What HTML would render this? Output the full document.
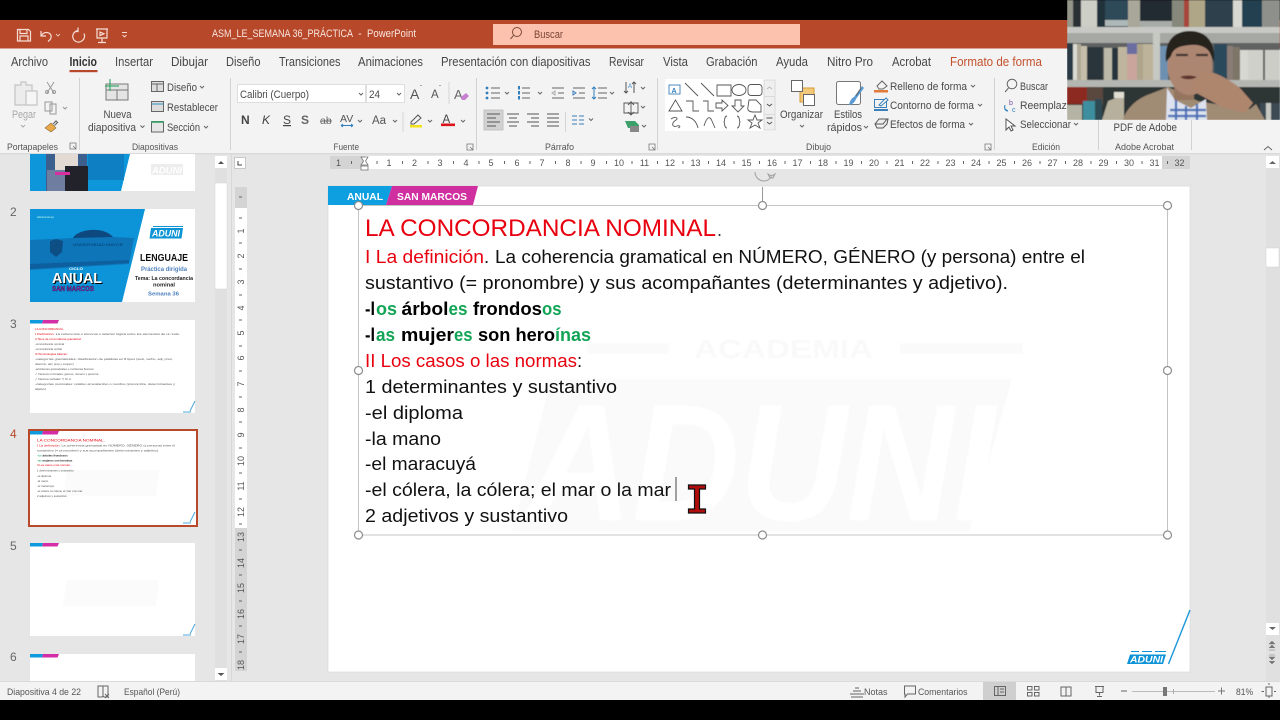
<!DOCTYPE html>
<html lang="es"><head><meta charset="utf-8"><title>ASM_LE_SEMANA 36_PRÁCTICA - PowerPoint</title>
<style>
html,body{margin:0;padding:0;background:#000;width:1280px;height:720px;overflow:hidden}
svg.root{display:block;filter:blur(.3px)}
text{font-family:"Liberation Sans",sans-serif;fill:#444;font-size:12px}
.t{font-size:12.5px;fill:#474747}
.s{font-size:11px;fill:#4a4a4a}
.g{font-size:9.5px;fill:#555}
.b{font-size:18.5px;fill:#111}
.r{fill:#E8000F}
.gr{fill:#12A555;font-weight:bold}
.k{font-weight:bold;fill:#000}
.n{font-size:9px;fill:#555;text-anchor:middle}
.i{fill:none;stroke:#666;stroke-width:1}
.h{fill:#fff;stroke:#8c8c8c;stroke-width:1.2}
.m{font-size:2.9px;fill:#555}
</style></head><body>
<svg class="root" width="1280" height="720" viewBox="0 0 1280 720" xmlns="http://www.w3.org/2000/svg">
<defs><filter id="bl"><feGaussianBlur stdDeviation="0.6"/></filter><filter id="bt"><feGaussianBlur stdDeviation="0.25"/></filter></defs>
<rect width="1280" height="720" fill="#000"/>
<!-- title bar -->
<rect y="20" width="1280" height="28.500" fill="#B8482A"/>
<g fill="none" stroke="#F5DDD5" stroke-width="1.200">
<path d="M17.500 29.500h11l2 2v9.500h-13zM20 29.500v4h7v-4M20 41v-5h8v5"/>
<path d="M41 31v5h5M41.500 35.500c2-4 8-4 9.500 0c.7 2.500-1 4.500-3 6"/>
<path d="M56 34l2 2 2-2" stroke-width=".8"/>
<path d="M76 30.500c-4 1-6 4-5 7.500c1 3.500 5 5 8 3.500c3-1.500 4.500-5 3-8M76 27.500v4h-3" transform="translate(2 0)"/>
<path d="M96 29h12M97 29v9h10v-9M102 38v4M98 42.500h8M100 32l4 1.800-4 1.800z"/>
<path d="M122 32.500h5M122.500 35l2 2 2-2" stroke-width=".9"/>
</g>
<text x="212" y="37" textLength="141" lengthAdjust="spacingAndGlyphs" style="font-size:11px;fill:#F8E6DF">ASM_LE_SEMANA 36_PRÁCTICA</text>
<text x="358" y="37" style="font-size:11px;fill:#F8E6DF">-</text>
<text x="367" y="37" textLength="49" lengthAdjust="spacingAndGlyphs" style="font-size:11px;fill:#F8E6DF">PowerPoint</text>
<rect x="493" y="24" width="307" height="21" fill="#FCC2AE"/>
<circle cx="517" cy="32" r="4.500" fill="none" stroke="#7A4A3A" stroke-width="1"/><path d="M513.500 35.500l-3 3.500" stroke="#7A4A3A" stroke-width="1"/>
<text x="534" y="38" textLength="29" lengthAdjust="spacingAndGlyphs" style="font-size:11px;fill:#7A4636">Buscar</text>
<!-- ribbon -->
<rect y="48.500" width="1280" height="105" fill="#F3F3F3"/>
<text class="t" x="11" y="66" textLength="37" lengthAdjust="spacingAndGlyphs">Archivo</text>
<text class="t" x="69.500" y="66" textLength="27.500" lengthAdjust="spacingAndGlyphs" style="fill:#333;font-weight:bold">Inicio</text>
<rect x="69.500" y="70" width="28" height="2.200" fill="#B8482A"/>
<text class="t" x="115" y="66" textLength="38" lengthAdjust="spacingAndGlyphs">Insertar</text>
<text class="t" x="171" y="66" textLength="37" lengthAdjust="spacingAndGlyphs">Dibujar</text>
<text class="t" x="226" y="66" textLength="34.500" lengthAdjust="spacingAndGlyphs">Diseño</text>
<text class="t" x="279" y="66" textLength="61.500" lengthAdjust="spacingAndGlyphs">Transiciones</text>
<text class="t" x="358" y="66" textLength="65" lengthAdjust="spacingAndGlyphs">Animaciones</text>
<text class="t" x="441" y="66" textLength="149.500" lengthAdjust="spacingAndGlyphs">Presentación con diapositivas</text>
<text class="t" x="609" y="66" textLength="35" lengthAdjust="spacingAndGlyphs">Revisar</text>
<text class="t" x="663" y="66" textLength="25" lengthAdjust="spacingAndGlyphs">Vista</text>
<text class="t" x="706" y="66" textLength="51.500" lengthAdjust="spacingAndGlyphs">Grabación</text>
<text class="t" x="776" y="66" textLength="32" lengthAdjust="spacingAndGlyphs">Ayuda</text>
<text class="t" x="827" y="66" textLength="46" lengthAdjust="spacingAndGlyphs">Nitro Pro</text>
<text class="t" x="892" y="66" textLength="39" lengthAdjust="spacingAndGlyphs">Acrobat</text>
<text class="t" x="950" y="66" textLength="92" lengthAdjust="spacingAndGlyphs" style="fill:#C4512D">Formato de forma</text>
<!-- separators -->
<path d="M79.500 78v72M230.500 78v72M476.500 78v72M657.500 78v72M994.500 78v72M1098.500 120v30M1191.500 120v30" stroke="#D2D2D2" fill="none"/>
<!-- group labels -->
<text class="g" x="7" y="150" textLength="51" lengthAdjust="spacingAndGlyphs">Portapapeles</text>
<text class="g" x="132" y="150" textLength="46" lengthAdjust="spacingAndGlyphs">Diapositivas</text>
<text class="g" x="333.500" y="150" textLength="25.500" lengthAdjust="spacingAndGlyphs">Fuente</text>
<text class="g" x="545" y="150" textLength="29" lengthAdjust="spacingAndGlyphs">Párrafo</text>
<text class="g" x="806" y="150" textLength="25" lengthAdjust="spacingAndGlyphs">Dibujo</text>
<text class="g" x="1032" y="150" textLength="28" lengthAdjust="spacingAndGlyphs">Edición</text>
<text class="g" x="1115" y="150" textLength="59" lengthAdjust="spacingAndGlyphs">Adobe Acrobat</text>
<g fill="none" stroke="#777" stroke-width=".8"><path d="M70 143h6v6h-6zM73 146l3 3M76 147v2h-2"/><path d="M467 144h6v6h-6zM470 147l3 3M473 148v2h-2"/><path d="M649 144h6v6h-6zM652 147l3 3M655 148v2h-2"/><path d="M985 144h6v6h-6zM988 147l3 3M991 148v2h-2"/></g>
<!-- clipboard -->
<g fill="none" stroke="#C4C4C4" stroke-width="1.200"><path d="M15 85h6v-3h5v3h6v20h-17z" fill="#ECECEC"/><rect x="26" y="91" width="11" height="14" fill="#F6F6F6"/></g>
<text x="12" y="118" textLength="24" lengthAdjust="spacingAndGlyphs" style="font-size:11px;fill:#A8A8A8">Pegar</text>
<path d="M21 125l2 2 2-2" fill="none" stroke="#aaa"/>
<g fill="none" stroke="#999" stroke-width="1"><path d="M47 82l7 11M54 82l-7 11"/><circle cx="47" cy="92" r="1.500"/><circle cx="54" cy="92" r="1.500"/><path d="M45 102h7v9h-7zM50 104h6v10h-6z"/><path d="M63 107l2 2 2-2"/></g>
<path d="M45 128l6-5 5 5-5 4z" fill="#E9A94A" stroke="#8a6a3a" stroke-width=".6"/><path d="M53 124l3-3 1.500 1.500-3 3" fill="none" stroke="#666" stroke-width="1.200"/>
<!-- nueva diapositiva -->
<rect x="106" y="84" width="22" height="16" fill="#E4E4E4" stroke="#777"/><path d="M106 90h22M117 90v10" stroke="#777" fill="none"/><path d="M105 86h14M110 79v12" stroke="#3BAA6A" stroke-width="1.200" fill="none"/>
<text class="s" x="103.500" y="118" textLength="28" lengthAdjust="spacingAndGlyphs">Nueva</text>
<text class="s" x="88" y="131" textLength="48" lengthAdjust="spacingAndGlyphs">diapositiva</text>
<path d="M140.500 125.500l2 2 2-2" fill="none" stroke="#666"/>
<g class="i"><rect x="151.500" y="81.500" width="12" height="10" fill="#DDD"/><path d="M151.500 84h12M157 84v7"/><rect x="151.500" y="101.500" width="12" height="10" fill="#DDD"/><path d="M151.500 104h12" stroke="#2F8FBF"/><rect x="151.500" y="121.500" width="12" height="10.500" fill="#E6E6E6"/><path d="M151 122h13" stroke="#38A167" stroke-width="1.600"/></g>
<text class="s" x="167" y="91" textLength="30" lengthAdjust="spacingAndGlyphs">Diseño</text><path d="M200 86l2 2 2-2" class="i"/>
<text class="s" x="167" y="111" textLength="51" lengthAdjust="spacingAndGlyphs">Restablecer</text>
<text class="s" x="167" y="131" textLength="33" lengthAdjust="spacingAndGlyphs">Sección</text><path d="M204 126l2 2 2-2" class="i"/>
<!-- font -->
<rect x="237.500" y="84.500" width="128" height="18" fill="#fff" stroke="#DEDEDE"/><rect x="366.500" y="84.500" width="38" height="18" fill="#fff" stroke="#DEDEDE"/>
<text class="s" x="240" y="98" textLength="69" lengthAdjust="spacingAndGlyphs">Calibri (Cuerpo)</text>
<path d="M359 93l2 2 2-2M397 93l2 2 2-2" class="i"/>
<text class="s" x="369" y="98" textLength="11" lengthAdjust="spacingAndGlyphs">24</text>
<text x="410" y="99" style="font-size:14px;fill:#555">A</text><text x="420" y="90" style="font-size:6px;fill:#555">ˆ</text>
<text x="431" y="98" style="font-size:11.500px;fill:#555">A</text><text x="439" y="90" style="font-size:6px;fill:#555">ˇ</text>
<text x="454" y="99" style="font-size:13px;fill:#666">A</text><path d="M461 97l5-4 3 3-4 4h-3z" fill="#C77FD0"/>
<path d="M449 82v22" stroke="#d5d5d5"/>
<text x="241" y="124" style="font-size:12px;font-weight:bold;fill:#444">N</text>
<text x="262" y="124" style="font-size:12px;font-style:italic;fill:#444">K</text>
<text x="283" y="124" style="font-size:12px;fill:#444;text-decoration:underline">S</text>
<text x="301" y="124" style="font-size:12px;font-weight:bold;fill:#666">S</text>
<text x="320" y="124" style="font-size:10.500px;fill:#666;text-decoration:line-through">ab</text>
<text x="340" y="122" style="font-size:10.500px;fill:#555">AV</text><path d="M341 125.500h12M341 125.500l2-1.500M341 125.500l2 1.500M353 125.500l-2-1.500M353 125.500l-2 1.500" stroke="#2F7FBF" fill="none"/>
<path d="M358 120l2 2 2-2M393 120l2 2 2-2" class="i"/>
<text x="372" y="124" style="font-size:11.500px;fill:#555">Aa</text>
<path d="M403 112v20" stroke="#d5d5d5"/>
<path d="M411 122l7-7 3 3-7 6h-3z" fill="none" stroke="#555"/><rect x="410" y="125" width="12" height="2.500" fill="#F2E21A"/><path d="M428 120l2 2 2-2" class="i"/>
<text x="442.500" y="123" style="font-size:11.500px;fill:#444">A</text><rect x="441" y="123.500" width="14" height="2.600" fill="#D8141C"/><path d="M461 120l2 2 2-2" class="i"/>
<!-- paragraph -->
<g stroke="#666" fill="none" stroke-width="1"><path d="M491 88h9M491 93h9M491 98h9M522 88h8M522 93h8M522 98h8M552 88h12M558 93h6M552 98h12M573 88h12M579 93h6M573 98h12M598 88h9M598 93h9M598 98h9"/><path d="M552 93l3-2v4z" stroke="#aaa"/><path d="M573 91l3 2-3 2z" stroke="#3D7FB9"/></g>
<g fill="#2F7FBF"><circle cx="487" cy="88" r="1.400"/><circle cx="487" cy="93" r="1.400"/><circle cx="487" cy="98" r="1.400"/><rect x="518" y="86" width="2" height="3.500"/><rect x="518" y="91" width="2" height="3.500"/><rect x="518" y="96" width="2" height="3.500"/></g>
<path d="M594 87v12M592 89l2-2 2 2M592 97l2 2 2-2" stroke="#2F7FBF" fill="none"/>
<path d="M505 92l2 2 2-2M538 92l2 2 2-2M610 92l2 2 2-2M641 87l2 2 2-2" class="i"/>
<path d="M626 82v11M624 91l2 2 2-2M634 82v11M632 84l2-2 2 2" stroke="#555" fill="none"/>
<text x="628" y="88" style="font-size:6px;fill:#2F7FBF">A</text>
<rect x="484" y="110" width="19" height="20" fill="#D2D2D2" stroke="#BBB" stroke-width=".8"/>
<g stroke="#555" fill="none"><path d="M487 114h13M487 118h9M487 122h13M487 126h9M507 114h12M509 118h8M507 122h12M509 126h8M527 114h12M531 118h8M527 122h12M531 126h8M547 114h12M547 118h12M547 122h12M547 126h12"/></g>
<path d="M565.500 112v20" stroke="#d5d5d5"/>
<g stroke="#3D7FB9" fill="none"><path d="M572 116h5M572 120h5M572 124h5M579 116h5M579 120h5M579 124h5"/></g>
<path d="M589 118.500l2 2 2-2" class="i"/>
<path d="M624 103h14v10h-14zM631 101v14M628 105l3-3 3 3M628 112l3 3 3-3" stroke="#555" fill="none" stroke-width=".9"/>
<path d="M641 106l2 2 2-2M642 125l2 2 2-2" class="i"/>
<path d="M625 121h10l4 4v3h-11z" fill="#3BA06A"/><rect x="630" y="126" width="9" height="6" fill="#888"/>
<!-- shapes gallery -->
<rect x="665" y="79" width="110" height="52" fill="#fff"/>
<rect x="764" y="80" width="11" height="50" fill="#EFEFEF" stroke="#DADADA"/><path d="M764 96.500h11M764 114.500h11" stroke="#DADADA"/>
<path d="M767 89l2.500-2 2.500 2" stroke="#bbb" fill="none"/><path d="M767 104l2.500 2 2.500-2" stroke="#555" fill="none"/><path d="M766.500 118h6M767 122l2.500 2 2.500-2" stroke="#555" fill="none"/>
<g fill="none" stroke="#555" stroke-width=".9">
<rect x="669" y="85" width="11" height="9" stroke="#3D7FB9"/>
<path d="M685 83l13 13M701 83l13 13M717 85h14v11h-14z"/><ellipse cx="739" cy="90" rx="7" ry="5.500"/><rect x="748" y="84.500" width="14" height="11" rx="3"/>
<path d="M669 111l6.500-11 6.500 11zM686 101h7v10h6M703 101h5v10h6M716 103h6v-3l6 5.500-6 5.500v-3h-6zM735 100h6v6h3l-6 6-6-6h3zM749 100h7l5 5v7h-8c-4 0-6-2-5-5z"/>
<path d="M671 119c4-3 8-1 5 1c-5 3-4 8 1 6c3-1 4 1 1 2M686 117c5 0 10 3 12 11M704 126c3-10 6-10 8-5l3 7M727 116c-3 0-2 5-3 6c1 1 0 6 3 6M737 116c3 0 2 5 3 6c-1 1 0 6-3 6M755 115l2 5 5 0-4 3 2 5-5-3-5 3 2-5-4-3 5 0z"/>
</g>
<text x="671.500" y="93" style="font-size:7px;fill:#2F7FBF;font-weight:bold">A</text>
<!-- organizar etc -->
<rect x="800" y="88" width="14" height="14" fill="#F3C879" stroke="#D79B35"/><rect x="791.500" y="80.500" width="11" height="11" fill="#fff" stroke="#666"/><rect x="803.500" y="94.500" width="11" height="11" fill="#fff" stroke="#666"/>
<text class="s" x="780" y="118" textLength="43" lengthAdjust="spacingAndGlyphs">Organizar</text><path d="M800 125l2 2 2-2" class="i"/>
<rect x="836.500" y="81.500" width="24" height="23" rx="2" fill="#fff" stroke="#777"/><path d="M849 105c1-5 3-7 5-8l8-11 2 2-8 11c-1 3-4 6-7 6z" fill="#5A9BD5"/><path d="M856 96l5-8" stroke="#666"/>
<text class="s" x="834" y="118" textLength="28" lengthAdjust="spacingAndGlyphs">Estilos</text>
<text class="s" x="827" y="131" textLength="35" lengthAdjust="spacingAndGlyphs">rápidos</text><path d="M864 126l2 2 2-2" class="i"/>
<path d="M877 86l5-5 5 5-4 3h-4z" fill="none" stroke="#666"/><rect x="874" y="90" width="14" height="2.500" fill="#E07B39"/>
<rect x="874.500" y="99.500" width="12" height="8" fill="none" stroke="#3D7FB9"/><path d="M879 105l7-7 2 2-7 6z" fill="#fff" stroke="#3D7FB9"/><rect x="874" y="109" width="14" height="2" fill="#3D7FB9"/>
<path d="M875 124l4-5h9l-1 5-4 4h-6z" fill="#eee" stroke="#555"/><path d="M875 124h8l4-5" stroke="#555" fill="none"/>
<text class="s" x="890" y="90" textLength="77" lengthAdjust="spacingAndGlyphs">Relleno de forma</text><path d="M971 85l2 2 2-2" class="i"/>
<text class="s" x="890" y="109" textLength="84" lengthAdjust="spacingAndGlyphs">Contorno de forma</text><path d="M978 104l2 2 2-2" class="i"/>
<text class="s" x="890" y="128" textLength="75" lengthAdjust="spacingAndGlyphs">Efectos de forma</text><path d="M969 123l2 2 2-2" class="i"/>
<!-- editing -->
<circle cx="1012" cy="84" r="4.800" fill="none" stroke="#666"/><path d="M1008.500 88l-3.500 4" stroke="#666"/>
<text class="s" x="1020" y="90" textLength="28" lengthAdjust="spacingAndGlyphs">Buscar</text>
<text x="1009" y="105" style="font-size:7px;fill:#7C4FA8">b</text><text x="1012" y="112" style="font-size:7px;fill:#2F7FBF">c</text><path d="M1005 105c-1 3 0 6 3 6M1005 109l3 2" stroke="#2F7FBF" fill="none"/>
<text class="s" x="1020" y="109" textLength="56" lengthAdjust="spacingAndGlyphs">Reemplazar</text>
<path d="M1006 119v11l3-3 2 4 2-1-2-4h4z" fill="#fff" stroke="#555"/>
<text class="s" x="1020" y="128" textLength="51" lengthAdjust="spacingAndGlyphs">Seleccionar</text><path d="M1074 123l2 2 2-2" class="i"/>
<text class="s" x="1113.500" y="131" textLength="63.500" lengthAdjust="spacingAndGlyphs">PDF de Adobe</text>
<path d="M1264 150l4-3.500 4 3.500" class="i"/>
<!-- workspace -->
<rect y="153.500" width="1280" height="529" fill="#E6E6E6"/>
<rect y="153" width="1280" height="1.500" fill="#DADADA"/>
<!-- thumbnails -->
<g filter="url(#bt)">
<rect x="30" y="154" width="165" height="37" fill="#fff"/>
<path d="M30 154h100l-9 37H30z" fill="#0A96DA"/>
<rect x="88" y="154" width="36" height="26" fill="#0A7FC2"/>
<rect x="46" y="154" width="41" height="37" fill="#3D5F8E"/>
<rect x="55" y="154" width="23" height="16" fill="#E4DAD4"/><rect x="47" y="170" width="18" height="21" fill="#6E7DA0"/><rect x="65" y="166" width="23" height="25" fill="#24242C"/>
<rect x="55" y="172" width="15" height="3" fill="#D82E9F"/>
<rect x="151" y="164" width="32" height="11" fill="#EDEDED"/>
<text x="152" y="173.500" textLength="30" lengthAdjust="spacingAndGlyphs" style="font-size:9.500px;font-style:italic;font-weight:bold;fill:#fff">ADUNI</text>
<rect x="30" y="209" width="165" height="93" fill="#fff"/>
<path d="M30 209h115l-23 93H30z" fill="#0C94D8"/>
<path d="M30 240l43-2c5-9 30-12 40-1l21 1-5 26-99 6z" fill="#0A74B8"/>
<path d="M73 238c5-9 30-12 40-1z" fill="#0A4A7E"/>
<path d="M50 241l6-2 7 2-1 11-6 5-6-5z" fill="#0A4F85"/>
<path d="M30 264l99-4v3l-99 6z" fill="#0A5E9E"/>
<text x="73" y="246" textLength="50" lengthAdjust="spacingAndGlyphs" style="font-size:4px;fill:#063E6D">UNIVERSIDAD MAYOR</text>
<text x="37" y="218" style="font-size:2.500px;fill:#cfe">adunicursos.pe</text>
<text x="69" y="270" textLength="14" lengthAdjust="spacingAndGlyphs" style="font-size:4px;fill:#fff;font-weight:bold">CICLO</text>
<text x="53" y="284" textLength="50" lengthAdjust="spacingAndGlyphs" style="font-size:15px;font-weight:bold;fill:#000">ANUAL</text>
<text x="52" y="283" textLength="50" lengthAdjust="spacingAndGlyphs" style="font-size:15px;font-weight:bold;fill:#fff">ANUAL</text>
<text x="52" y="291" textLength="42" lengthAdjust="spacingAndGlyphs" style="font-size:7px;font-weight:bold;fill:#C52A9A;stroke:#1A1A60;stroke-width:.4">SAN MARCOS</text>
<path d="M151 228h32l-1.500 10.500h-32z" fill="#0E94D6"/><rect x="153" y="226" width="30" height="1" fill="#0E94D6"/>
<text x="152" y="236.500" textLength="28" lengthAdjust="spacingAndGlyphs" style="font-size:9px;font-style:italic;font-weight:bold;fill:#fff">ADUNI</text>
<text x="140" y="261" textLength="48" lengthAdjust="spacingAndGlyphs" style="font-size:10.500px;font-weight:bold;fill:#111">LENGUAJE</text>
<text x="141" y="271" textLength="46" lengthAdjust="spacingAndGlyphs" style="font-size:6px;font-weight:bold;fill:#4F81BD">Práctica dirigida</text>
<text x="135" y="280" textLength="58" lengthAdjust="spacingAndGlyphs" style="font-size:5px;font-weight:bold;fill:#222">Tema: La concordancia</text>
<text x="153" y="286.500" textLength="22" lengthAdjust="spacingAndGlyphs" style="font-size:5px;font-weight:bold;fill:#222">nominal</text>
<text x="148" y="295.500" textLength="31" lengthAdjust="spacingAndGlyphs" style="font-size:5.500px;font-weight:bold;fill:#4F81BD">Semana 36</text>
<rect x="30" y="320" width="165" height="93" fill="#fff"/>
<path d="M30 320h13l-1 3.500H30z" fill="#0C9BDD"/><path d="M43 320h16l-1.500 3.500H42z" fill="#D32FA6"/>
<text class="m" x="35" y="330" style="fill:#E8000F">LA CONCORDANCIA.</text>
<text class="m" x="35" y="335" textLength="145" lengthAdjust="spacingAndGlyphs"><tspan style="fill:#E8000F">I Definición.</tspan> La coherencia o armonía o relación lógica entre los elementos de un todo.</text>
<text class="m" x="35" y="340" style="fill:#E8000F">II Tipos de concordancia gramatical:</text>
<text class="m" x="35" y="345">-concordancia nominal</text>
<text class="m" x="35" y="350">-concordancia verbal</text>
<text class="m" x="35" y="355" style="fill:#E8000F">III Terminologías básicas:</text>
<text class="m" x="35" y="360" textLength="138" lengthAdjust="spacingAndGlyphs">-categorías gramaticales: clasificación de palabras en 8 tipos (sust, verbo, adj, pron,</text>
<text class="m" x="35" y="365">determin, adv, prep y conjunc)</text>
<text class="m" x="35" y="370">-accidentes gramaticales o morfemas flexivos:</text>
<text class="m" x="35" y="375">✓ Flexivos nominales: género, número y persona</text>
<text class="m" x="35" y="380">✓ Flexivos verbales: T, M, A</text>
<text class="m" x="35" y="385" textLength="140" lengthAdjust="spacingAndGlyphs">-categorías nominales: relativo al sustantivo o nombre (pronombre, determinantes y</text>
<text class="m" x="35" y="390">adjetivo)</text>
<path d="M183 412h8M190 411l5-10" stroke="#4CA8DC" fill="none"/>
<rect x="29" y="430" width="168" height="96" fill="#fff" stroke="#B8482A" stroke-width="2"/>
<path d="M30 431h13l-1 3.500H30z" fill="#0C9BDD"/><path d="M43 431h16l-1.500 3.500H42z" fill="#D32FA6"/>
<path d="M67 470h92l-3 26H63z" fill="#FBFBFB"/>
<text x="37" y="441.500" textLength="68" lengthAdjust="spacingAndGlyphs" style="fill:#E8000F;font-size:4px">LA CONCORDANCIA NOMINAL.</text>
<text class="m" x="37" y="446.500" textLength="138" lengthAdjust="spacingAndGlyphs"><tspan style="fill:#E8000F">I La definición</tspan>. La coherencia gramatical en NÚMERO, GÉNERO (y persona) entre el</text>
<text class="m" x="37" y="451.500" textLength="122" lengthAdjust="spacingAndGlyphs">sustantivo (= pronombre) y sus acompañantes (determinantes y adjetivo).</text>
<text class="m" x="37" y="456.500"><tspan style="fill:#12A555">-los </tspan><tspan style="font-weight:bold;fill:#222">árboles frondosos</tspan></text>
<text class="m" x="37" y="461.500"><tspan style="fill:#12A555">-las </tspan><tspan style="font-weight:bold;fill:#222">mujeres son heroínas</tspan></text>
<text class="m" x="37" y="466" style="fill:#E8000F">II Los casos o las normas:</text>
<text class="m" x="37" y="471.500">1 determinantes y sustantivo</text>
<text class="m" x="37" y="477">-el diploma</text>
<text class="m" x="37" y="482">-la mano</text>
<text class="m" x="37" y="487">-el maracuyá</text>
<text class="m" x="37" y="492">-el cólera, la cólera; el mar o la mar</text>
<text class="m" x="37" y="497">2 adjetivos y sustantivo</text>
<path d="M183 523h8M190 522l5-10" stroke="#4CA8DC" fill="none"/>
<rect x="30" y="543" width="165" height="93" fill="#fff"/>
<path d="M30 543h13l-1 3.500H30z" fill="#0C9BDD"/><path d="M43 543h16l-1.500 3.500H42z" fill="#D32FA6"/>
<path d="M67 580h92l-3 26H63z" fill="#FBFBFB"/>
<path d="M183 635h8M190 634l5-10" stroke="#4CA8DC" fill="none"/>
<rect x="30" y="654" width="165" height="29" fill="#fff"/>
<path d="M30 654h13l-1 3.500H30z" fill="#0C9BDD"/><path d="M43 654h16l-1.500 3.500H42z" fill="#D32FA6"/>
</g>
<text x="10" y="216" style="font-size:12px;fill:#666">2</text>
<text x="10" y="328" style="font-size:12px;fill:#666">3</text>
<text x="10" y="438" style="font-size:12px;fill:#B8482A">4</text>
<text x="10" y="550" style="font-size:12px;fill:#666">5</text>
<text x="10" y="661" style="font-size:12px;fill:#666">6</text>
<!-- thumb scrollbar -->
<rect x="215" y="156" width="12" height="526" fill="#E0E0E0"/>
<rect x="215" y="156" width="12" height="12" fill="#fff"/><path d="M218 164l3-3 3 3z" fill="#555"/>
<rect x="215" y="183" width="12" height="106" fill="#fff" stroke="#D4D4D4" stroke-width=".5"/>
<rect x="215" y="668" width="12" height="12" fill="#fff"/><path d="M217.500 673l3.500 3 3.500-3z" fill="#555"/>
<rect x="231" y="154" width="1" height="528" fill="#D8D8D8"/>
<!-- corner -->
<rect x="234.500" y="157.500" width="11" height="11" fill="#fff" stroke="#C8C8C8"/><path d="M238 161v4h4" stroke="#444" fill="none"/>
<!-- h ruler -->
<rect x="330" y="156" width="860" height="13" fill="#D4D4D4"/>
<rect x="365" y="156" width="797" height="13" fill="#fff"/>
<g>
<text class="n" x="338.500" y="166">1</text><text class="n" x="389" y="166">1</text><text class="n" x="414.500" y="166">2</text><text class="n" x="440" y="166">3</text><text class="n" x="466" y="166">4</text><text class="n" x="491" y="166">5</text><text class="n" x="517" y="166">6</text><text class="n" x="542" y="166">7</text><text class="n" x="568" y="166">8</text><text class="n" x="593" y="166">9</text><text class="n" x="619" y="166">10</text><text class="n" x="644.500" y="166">11</text><text class="n" x="670" y="166">12</text><text class="n" x="695.500" y="166">13</text><text class="n" x="721" y="166">14</text><text class="n" x="746.500" y="166">15</text><text class="n" x="772" y="166">16</text><text class="n" x="797.500" y="166">17</text><text class="n" x="823" y="166">18</text><text class="n" x="848.500" y="166">19</text><text class="n" x="874" y="166">20</text><text class="n" x="899.500" y="166">21</text><text class="n" x="925" y="166">22</text><text class="n" x="950.500" y="166">23</text><text class="n" x="976" y="166">24</text><text class="n" x="1001.500" y="166">25</text><text class="n" x="1027" y="166">26</text><text class="n" x="1052.500" y="166">27</text><text class="n" x="1078" y="166">28</text><text class="n" x="1103.500" y="166">29</text><text class="n" x="1129" y="166">30</text><text class="n" x="1154.500" y="166">31</text><text class="n" x="1179.500" y="166">32</text>
</g>
<path d="M351.500 161v3M377 161v3M402.500 161v3M428 161v3M453.500 161v3M479 161v3M504.500 161v3M530 161v3M555.500 161v3M581 161v3M606.500 161v3M632 161v3M657.500 161v3M683 161v3M708.500 161v3M734 161v3M759.500 161v3M785 161v3M810.500 161v3M836 161v3M861.500 161v3M887 161v3M912.500 161v3M938 161v3M963.500 161v3M989 161v3M1014.500 161v3M1040 161v3M1065.500 161v3M1091 161v3M1116.500 161v3M1142 161v3M1167.500 161v3" stroke="#666" fill="none"/>
<path d="M361 157h7l-2.500 4 2.500 4h-7l2.500-4z" fill="#fff" stroke="#777" stroke-width=".8"/><rect x="361" y="166" width="7" height="4" fill="#fff" stroke="#777" stroke-width=".8"/>
<!-- v ruler -->
<rect x="235" y="187" width="12" height="484" fill="#D4D4D4"/>
<rect x="235" y="208" width="12" height="320" fill="#fff"/>
<g>
<text class="n" transform="translate(244 231) rotate(-90)">1</text><text class="n" transform="translate(244 256) rotate(-90)">2</text><text class="n" transform="translate(244 282) rotate(-90)">3</text><text class="n" transform="translate(244 308) rotate(-90)">4</text><text class="n" transform="translate(244 333) rotate(-90)">5</text><text class="n" transform="translate(244 358) rotate(-90)">6</text><text class="n" transform="translate(244 384) rotate(-90)">7</text><text class="n" transform="translate(244 410) rotate(-90)">8</text><text class="n" transform="translate(244 435) rotate(-90)">9</text><text class="n" transform="translate(244 461) rotate(-90)">10</text><text class="n" transform="translate(244 486) rotate(-90)">11</text><text class="n" transform="translate(244 512) rotate(-90)">12</text><text class="n" transform="translate(244 537) rotate(-90)">13</text><text class="n" transform="translate(244 563) rotate(-90)">14</text><text class="n" transform="translate(244 588) rotate(-90)">15</text><text class="n" transform="translate(244 614) rotate(-90)">16</text><text class="n" transform="translate(244 639) rotate(-90)">17</text><text class="n" transform="translate(244 665) rotate(-90)">18</text>
</g>
<path d="M239 197h3M239 218h3M239 243h3M239 269h3M239 295h3M239 320h3M239 346h3M239 371h3M239 397h3M239 422h3M239 448h3M239 473h3M239 499h3M239 524h3M239 550h3M239 575h3M239 601h3M239 626h3M239 652h3" stroke="#666" fill="none"/>
<!-- slide -->
<rect x="328" y="186" width="862" height="486" fill="#fff" stroke="#D6D6D6" stroke-width=".6"/>
<g filter="url(#bl)">
<path d="M551 379h461l-43 153H512z" fill="#FAFAFA"/>
<text x="525" y="520" textLength="470" lengthAdjust="spacingAndGlyphs" style="font-size:166px;font-weight:bold;font-style:italic;fill:#fff">ADUNI</text>
<text x="694" y="358" textLength="179" lengthAdjust="spacingAndGlyphs" style="font-size:26px;font-weight:bold;fill:#F9F9F9">ACADEMIA</text>
<rect x="587" y="343" width="82" height="11" fill="#FAFAFA"/><rect x="900" y="343" width="123" height="11" fill="#FAFAFA"/>
</g>
<path d="M328 186h64l-6 19H328z" fill="#0D9FE0"/>
<path d="M392 186h86l-5 19h-87z" fill="#CF2F9F"/>
<text x="347" y="200" textLength="36" lengthAdjust="spacingAndGlyphs" style="font-size:10.500px;font-weight:bold;fill:#fff">ANUAL</text>
<text x="397" y="200" textLength="70" lengthAdjust="spacingAndGlyphs" style="font-size:10.500px;font-weight:bold;fill:#fff">SAN MARCOS</text>
<!-- selection box -->
<rect x="358.500" y="205.500" width="809" height="329.500" fill="none" stroke="#C4C4C4" stroke-width="1"/>
<path d="M762.500 187v18" stroke="#999" fill="none"/>
<path d="M755 172c0 5 4 9 9 9c4 0 7-3 8-6M768 174l3.500 2 3.500-2-2 4h-3z" fill="none" stroke="#A0A0A0" stroke-width="1"/>
<circle class="h" cx="358.500" cy="205.500" r="4"/><circle class="h" cx="762.500" cy="205.500" r="4"/><circle class="h" cx="1167.500" cy="205.500" r="4"/>
<circle class="h" cx="358.500" cy="370.500" r="4"/><circle class="h" cx="1167.500" cy="370.500" r="4"/>
<circle class="h" cx="358.500" cy="535" r="4"/><circle class="h" cx="762.500" cy="535" r="4"/><circle class="h" cx="1167.500" cy="535" r="4"/>
<!-- body text -->
<g>
<text x="365" y="236" textLength="351" lengthAdjust="spacingAndGlyphs" style="font-size:24px;fill:#E8000F">LA CONCORDANCIA NOMINAL</text>
<text x="717" y="236" style="font-size:18px;fill:#333">.</text>
<text class="b r" x="365" y="263" textLength="119" lengthAdjust="spacingAndGlyphs">I La definición</text>
<text class="b" x="484" y="263">.</text>
<text class="b" x="495" y="263" textLength="590" lengthAdjust="spacingAndGlyphs">La coherencia gramatical en NÚMERO, GÉNERO (y persona) entre el</text>
<text class="b" x="365" y="289" textLength="643" lengthAdjust="spacingAndGlyphs">sustantivo (= pronombre) y sus acompañantes (determinantes y adjetivo).</text>
<text class="b k" x="365" y="315" textLength="10" lengthAdjust="spacingAndGlyphs">-l</text>
<text class="b gr" x="376" y="315" textLength="21" lengthAdjust="spacingAndGlyphs">os</text>
<text class="b k" x="401.500" y="315" textLength="47" lengthAdjust="spacingAndGlyphs">árbol</text>
<text class="b gr" x="448.500" y="315" textLength="19" lengthAdjust="spacingAndGlyphs">es</text>
<text class="b k" x="473" y="315" textLength="69" lengthAdjust="spacingAndGlyphs">frondos</text>
<text class="b gr" x="542" y="315" textLength="19.500" lengthAdjust="spacingAndGlyphs">os</text>
<text class="b k" x="365" y="341" textLength="10" lengthAdjust="spacingAndGlyphs">-l</text>
<text class="b gr" x="376" y="341" textLength="19" lengthAdjust="spacingAndGlyphs">as</text>
<text class="b k" x="401" y="341" textLength="53" lengthAdjust="spacingAndGlyphs">mujer</text>
<text class="b gr" x="454" y="341" textLength="18.500" lengthAdjust="spacingAndGlyphs">es</text>
<text class="b k" x="478" y="341" textLength="77" lengthAdjust="spacingAndGlyphs">son hero</text>
<text class="b gr" x="555" y="341" textLength="36" lengthAdjust="spacingAndGlyphs">ínas</text>
<text class="b r" x="365" y="367" textLength="212" lengthAdjust="spacingAndGlyphs">II Los casos o las normas</text>
<text class="b" x="577" y="367">:</text>
<text class="b" x="365" y="393" textLength="252" lengthAdjust="spacingAndGlyphs">1 determinantes y sustantivo</text>
<text class="b" x="365" y="419" textLength="98" lengthAdjust="spacingAndGlyphs">-el diploma</text>
<text class="b" x="365" y="445" textLength="76" lengthAdjust="spacingAndGlyphs">-la mano</text>
<text class="b" x="365" y="470" textLength="111" lengthAdjust="spacingAndGlyphs">-el maracuyá</text>
<text class="b" x="365" y="496" textLength="306" lengthAdjust="spacingAndGlyphs">-el cólera, la cólera; el mar o la mar</text>
<text class="b" x="365" y="522" textLength="203" lengthAdjust="spacingAndGlyphs">2 adjetivos y sustantivo</text>
</g>
<rect x="675.500" y="477" width="1" height="24" fill="#444"/>
<!-- I-beam cursor -->
<path d="M688.500 485h17v4h-6v20h6v4h-17v-4h6v-20h-6z" fill="#B00D0D" stroke="#111" stroke-width="1.200"/>
<!-- logo bottom-right -->
<path d="M1130 654.500h36l-3 9.500h-36z" fill="#0E94D6"/>
<path d="M1131 651.500h8M1142 651.500h10M1155 651.500h11" stroke="#0E94D6" fill="none"/>
<text x="1130" y="662.500" textLength="33" lengthAdjust="spacingAndGlyphs" style="font-size:9.500px;font-weight:bold;font-style:italic;fill:#fff">ADUNI</text>
<path d="M1168.500 664l21.500-54" stroke="#1B96D8" stroke-width="1.400" fill="none"/>
<!-- right scrollbar -->
<rect x="1266" y="156" width="14" height="526" fill="#E0E0E0"/>
<rect x="1266" y="156" width="13" height="12" fill="#fff"/><path d="M1269 164l3.500-3 3.500 3z" fill="#666"/>
<rect x="1266" y="248" width="13" height="19" fill="#fff" stroke="#CFCFCF" stroke-width=".5"/>
<rect x="1266" y="623" width="13" height="12" fill="#fff"/><path d="M1269 627l3.500 3 3.500-3z" fill="#666"/>
<path d="M1269 644l3-3 3 3zM1269 648l3-3 3 3M1269 650h6M1269 655h6M1269 657l3 3 3-3zM1269 661l3 3 3-3" fill="#777" stroke="#777" stroke-width=".5"/>
<!-- status bar -->
<rect y="682" width="1280" height="18" fill="#F3F3F3"/>
<rect y="681" width="1280" height="1" fill="#DADADA"/>
<text class="g" x="7" y="695" textLength="74" lengthAdjust="spacingAndGlyphs">Diapositiva 4 de 22</text>
<path d="M98 686h10v11h-4l-1-1-1 1h-4zM103 686v10M105 694l4 4M109 694l-4 4" fill="none" stroke="#666"/>
<text class="g" x="124" y="695" textLength="56" lengthAdjust="spacingAndGlyphs">Español (Perú)</text>
<path d="M850 694h14M851 697h12M853 691h8M855 688h4" stroke="#666" fill="none"/>
<text class="g" x="864" y="695" textLength="23.500" lengthAdjust="spacingAndGlyphs">Notas</text>
<path d="M904.500 686h11v8h-8l-2.500 3v-3h-.5z" fill="none" stroke="#666"/>
<text class="g" x="918" y="695" textLength="49.500" lengthAdjust="spacingAndGlyphs">Comentarios</text>
<rect x="983" y="682" width="33" height="18" fill="#CFCFCF"/>
<g fill="none" stroke="#666"><rect x="994.500" y="686.500" width="11" height="9"/><path d="M998 686.500v9M1000 689h4M1000 692h4"/>
<rect x="1027.500" y="686.500" width="4.500" height="3.500"/><rect x="1034.500" y="686.500" width="4.500" height="3.500"/><rect x="1027.500" y="692.500" width="4.500" height="3.500"/><rect x="1034.500" y="692.500" width="4.500" height="3.500"/>
<path d="M1061 687h5v9h-5zM1066 687h5v9h-5z"/>
<path d="M1095 686.500h9M1096 686.500v6h7v-6M1099.500 692.500v3M1097 696.500h5"/></g>
<rect x="1121" y="690.500" width="6" height="1" fill="#666"/>
<rect x="1132" y="691" width="83" height="1" fill="#BBB"/>
<rect x="1163" y="687" width="4" height="9" fill="#777"/>
<path d="M1173.500 689v5" stroke="#AAA"/>
<path d="M1218 691h7M1221.500 687.500v7" stroke="#777"/>
<text class="g" x="1236" y="695" textLength="17" lengthAdjust="spacingAndGlyphs">81%</text>
<path d="M1266 687h6v9h-6zM1264 691.500h-2.500M1276 691.500h-2M1269 685v-2M1269 698v-2" fill="none" stroke="#666"/>
<!-- webcam -->
<svg x="1067" y="0" width="213" height="120" viewBox="1067 0 213 120">
<g filter="url(#bl)">
<rect x="1067" y="0" width="213" height="120" fill="#5E6260"/>
<rect x="1067" y="0" width="213" height="29" fill="#3F4B52"/>
<rect x="1067" y="0" width="6" height="27" fill="#94968A"/><rect x="1073" y="0" width="8" height="27" fill="#2C3034"/><rect x="1081" y="0" width="16" height="27" fill="#CDCEC6"/><rect x="1097" y="0" width="8" height="27" fill="#20303A"/><rect x="1105" y="0" width="23" height="27" fill="#2D4A58"/><rect x="1105" y="20" width="23" height="6" fill="#AEB8B8"/><rect x="1128" y="0" width="12" height="27" fill="#A8A79A"/><rect x="1140" y="0" width="32" height="27" fill="#222B32"/><rect x="1140" y="21" width="32" height="6" fill="#A8ACA8"/><rect x="1172" y="0" width="12" height="27" fill="#86887C"/><rect x="1184" y="0" width="5" height="27" fill="#A8453A"/><rect x="1189" y="0" width="16" height="27" fill="#AFA688"/><rect x="1205" y="0" width="28" height="27" fill="#2F404C"/><rect x="1233" y="0" width="9" height="27" fill="#D8D8D2"/><rect x="1242" y="0" width="20" height="28" fill="#23404F"/><rect x="1262" y="0" width="18" height="27" fill="#8D908B"/>
<rect x="1067" y="27" width="213" height="6" fill="#C8C9C5"/>
<rect x="1067" y="33" width="213" height="10" fill="#A6A8A4"/>
<rect x="1067" y="43" width="6" height="37" fill="#2A3A44"/><rect x="1073" y="44" width="4" height="36" fill="#DADAD2"/><rect x="1077" y="44" width="4" height="36" fill="#AFA896"/><rect x="1081" y="46" width="6" height="34" fill="#C4BEAA"/><rect x="1087" y="47" width="16" height="33" fill="#2A343A"/><rect x="1104" y="48" width="8" height="32" fill="#BDB9A8"/><rect x="1112" y="48" width="6" height="32" fill="#25343E"/><rect x="1118" y="47" width="9" height="33" fill="#BFB59E"/><rect x="1127" y="43" width="10" height="37" fill="#C9A59C"/><rect x="1127" y="43" width="10" height="11" fill="#6A6EA0"/><rect x="1137" y="44" width="6" height="36" fill="#AFA58C"/><rect x="1143" y="44" width="10" height="36" fill="#BDB39B"/><rect x="1153" y="33" width="7" height="49" fill="#C6C8C2"/><rect x="1160" y="46" width="8" height="35" fill="#6E90B0"/>
<rect x="1214" y="44" width="13" height="36" fill="#29485A"/><rect x="1227" y="46" width="6" height="34" fill="#8A7C76"/><rect x="1233" y="47" width="7" height="33" fill="#7C7468"/><rect x="1240" y="50" width="8" height="30" fill="#D8D8D2"/><rect x="1248" y="50" width="15" height="30" fill="#D0D0CA"/><rect x="1265" y="50" width="15" height="30" fill="#CDCDC8"/>
<rect x="1067" y="80" width="213" height="7" fill="#B4B6B1"/>
<rect x="1067" y="87" width="213" height="33" fill="#2F3436"/>
<rect x="1067" y="87" width="20" height="17" fill="#8C2A20"/><rect x="1087" y="87" width="16" height="18" fill="#5A463E"/>
<rect x="1067" y="105" width="15" height="15" fill="#B5B3A3"/><rect x="1083" y="101" width="12" height="19" fill="#3E8E9E"/><rect x="1095" y="99" width="7" height="21" fill="#2E4B55"/><path d="M1102 120l6-19 16-6v25z" fill="#B6B09C"/><rect x="1114" y="92" width="10" height="6" fill="#E0DED2"/>
<rect x="1260" y="103" width="20" height="17" fill="#3E4A52"/><rect x="1266" y="103" width="5" height="17" fill="#C8C8C2"/>
<!-- person -->
<path d="M1123 120c3-11 13-21 27-26l18-7 30 14 17 3 35 5 6-5 9 16z" fill="#A08B75"/>
<path d="M1167 88l8 12 16 8 15-9 1 21h-41z" fill="#DDE2EE"/>
<path d="M1170 110h36M1168 116h38M1176 96v24M1186 106v14M1197 104v16" stroke="#4A6FB5" stroke-width="2.200" fill="none"/>
<rect x="1174" y="84" width="20" height="16" fill="#96745F"/>
<ellipse cx="1190" cy="66" rx="22.500" ry="29" fill="#AD8672"/>
<path d="M1166 62c-2-22 9-31 24-31c16 0 26 11 24 31l-3-7c-3-8-11-11-21-10c-10 1-17 3-19 11z" fill="#25201F"/>
<path d="M1176 55h12M1196 55h12" stroke="#3E322E" stroke-width="2.200" fill="none"/>
<path d="M1180 77c5-2 11-2 17 0c-5 3-12 3-17 0z" fill="#5E352F"/>
<path d="M1193 85c3-6 8-13 15-13c8 0 20 7 32 16l13 15-8 10-23-6-22-12c-4-2-7-5-7-10z" fill="#AE866E"/>
</g>
</svg>
</svg>
</body></html>
